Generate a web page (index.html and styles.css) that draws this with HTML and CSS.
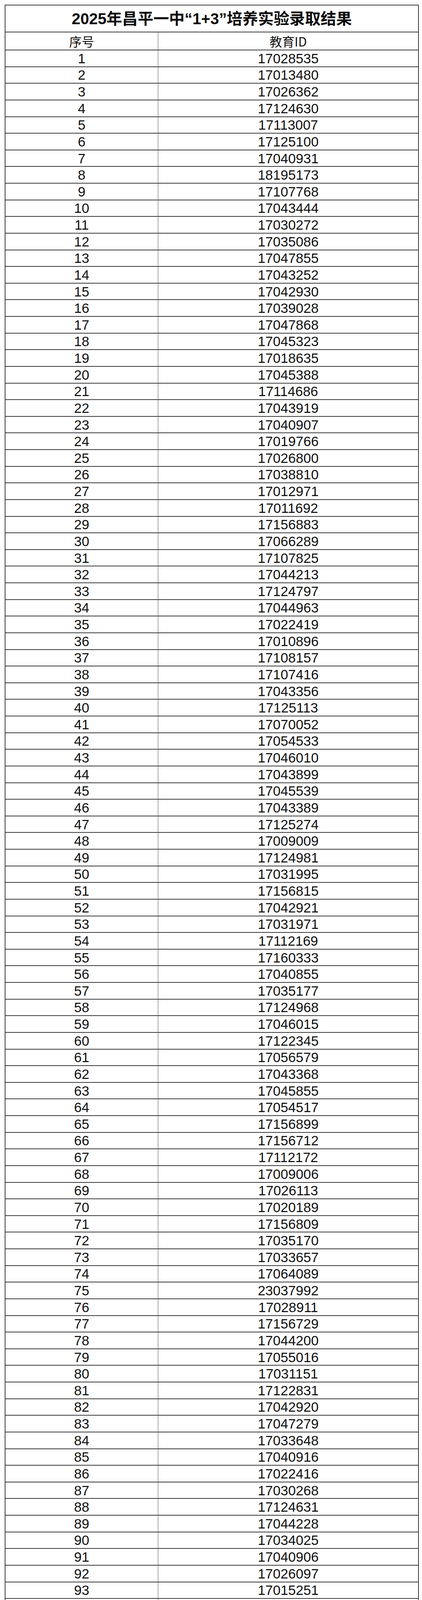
FILE: index.html
```html
<!DOCTYPE html>
<html lang="zh-CN">
<head>
<meta charset="utf-8">
<title>2025年昌平一中“1+3”培养实验录取结果</title>
<link rel="stylesheet" href="styles.css">
</head>
<body>
<div class="sheet">
  <div class="title">2025年昌平一中“1+3”培养实验录取结果</div>
  <div class="row head"><div class="c1">序号</div><div class="c2">教育ID</div></div>
  <div class="row"><div class="c1">1</div><div class="c2">17028535</div></div>
  <div class="row"><div class="c1">2</div><div class="c2">17013480</div></div>
  <div class="row"><div class="c1">3</div><div class="c2">17026362</div></div>
  <div class="row"><div class="c1">4</div><div class="c2">17124630</div></div>
  <div class="row"><div class="c1">5</div><div class="c2">17113007</div></div>
  <div class="row"><div class="c1">6</div><div class="c2">17125100</div></div>
  <div class="row"><div class="c1">7</div><div class="c2">17040931</div></div>
  <div class="row"><div class="c1">8</div><div class="c2">18195173</div></div>
  <div class="row"><div class="c1">9</div><div class="c2">17107768</div></div>
  <div class="row"><div class="c1">10</div><div class="c2">17043444</div></div>
  <div class="row"><div class="c1">11</div><div class="c2">17030272</div></div>
  <div class="row"><div class="c1">12</div><div class="c2">17035086</div></div>
  <div class="row"><div class="c1">13</div><div class="c2">17047855</div></div>
  <div class="row"><div class="c1">14</div><div class="c2">17043252</div></div>
  <div class="row"><div class="c1">15</div><div class="c2">17042930</div></div>
  <div class="row"><div class="c1">16</div><div class="c2">17039028</div></div>
  <div class="row"><div class="c1">17</div><div class="c2">17047868</div></div>
  <div class="row"><div class="c1">18</div><div class="c2">17045323</div></div>
  <div class="row"><div class="c1">19</div><div class="c2">17018635</div></div>
  <div class="row"><div class="c1">20</div><div class="c2">17045388</div></div>
  <div class="row"><div class="c1">21</div><div class="c2">17114686</div></div>
  <div class="row"><div class="c1">22</div><div class="c2">17043919</div></div>
  <div class="row"><div class="c1">23</div><div class="c2">17040907</div></div>
  <div class="row"><div class="c1">24</div><div class="c2">17019766</div></div>
  <div class="row"><div class="c1">25</div><div class="c2">17026800</div></div>
  <div class="row"><div class="c1">26</div><div class="c2">17038810</div></div>
  <div class="row"><div class="c1">27</div><div class="c2">17012971</div></div>
  <div class="row"><div class="c1">28</div><div class="c2">17011692</div></div>
  <div class="row"><div class="c1">29</div><div class="c2">17156883</div></div>
  <div class="row"><div class="c1">30</div><div class="c2">17066289</div></div>
  <div class="row"><div class="c1">31</div><div class="c2">17107825</div></div>
  <div class="row"><div class="c1">32</div><div class="c2">17044213</div></div>
  <div class="row"><div class="c1">33</div><div class="c2">17124797</div></div>
  <div class="row"><div class="c1">34</div><div class="c2">17044963</div></div>
  <div class="row"><div class="c1">35</div><div class="c2">17022419</div></div>
  <div class="row"><div class="c1">36</div><div class="c2">17010896</div></div>
  <div class="row"><div class="c1">37</div><div class="c2">17108157</div></div>
  <div class="row"><div class="c1">38</div><div class="c2">17107416</div></div>
  <div class="row"><div class="c1">39</div><div class="c2">17043356</div></div>
  <div class="row"><div class="c1">40</div><div class="c2">17125113</div></div>
  <div class="row"><div class="c1">41</div><div class="c2">17070052</div></div>
  <div class="row"><div class="c1">42</div><div class="c2">17054533</div></div>
  <div class="row"><div class="c1">43</div><div class="c2">17046010</div></div>
  <div class="row"><div class="c1">44</div><div class="c2">17043899</div></div>
  <div class="row"><div class="c1">45</div><div class="c2">17045539</div></div>
  <div class="row"><div class="c1">46</div><div class="c2">17043389</div></div>
  <div class="row"><div class="c1">47</div><div class="c2">17125274</div></div>
  <div class="row"><div class="c1">48</div><div class="c2">17009009</div></div>
  <div class="row"><div class="c1">49</div><div class="c2">17124981</div></div>
  <div class="row"><div class="c1">50</div><div class="c2">17031995</div></div>
  <div class="row"><div class="c1">51</div><div class="c2">17156815</div></div>
  <div class="row"><div class="c1">52</div><div class="c2">17042921</div></div>
  <div class="row"><div class="c1">53</div><div class="c2">17031971</div></div>
  <div class="row"><div class="c1">54</div><div class="c2">17112169</div></div>
  <div class="row"><div class="c1">55</div><div class="c2">17160333</div></div>
  <div class="row"><div class="c1">56</div><div class="c2">17040855</div></div>
  <div class="row"><div class="c1">57</div><div class="c2">17035177</div></div>
  <div class="row"><div class="c1">58</div><div class="c2">17124968</div></div>
  <div class="row"><div class="c1">59</div><div class="c2">17046015</div></div>
  <div class="row"><div class="c1">60</div><div class="c2">17122345</div></div>
  <div class="row"><div class="c1">61</div><div class="c2">17056579</div></div>
  <div class="row"><div class="c1">62</div><div class="c2">17043368</div></div>
  <div class="row"><div class="c1">63</div><div class="c2">17045855</div></div>
  <div class="row"><div class="c1">64</div><div class="c2">17054517</div></div>
  <div class="row"><div class="c1">65</div><div class="c2">17156899</div></div>
  <div class="row"><div class="c1">66</div><div class="c2">17156712</div></div>
  <div class="row"><div class="c1">67</div><div class="c2">17112172</div></div>
  <div class="row"><div class="c1">68</div><div class="c2">17009006</div></div>
  <div class="row"><div class="c1">69</div><div class="c2">17026113</div></div>
  <div class="row"><div class="c1">70</div><div class="c2">17020189</div></div>
  <div class="row"><div class="c1">71</div><div class="c2">17156809</div></div>
  <div class="row"><div class="c1">72</div><div class="c2">17035170</div></div>
  <div class="row"><div class="c1">73</div><div class="c2">17033657</div></div>
  <div class="row"><div class="c1">74</div><div class="c2">17064089</div></div>
  <div class="row"><div class="c1">75</div><div class="c2">23037992</div></div>
  <div class="row"><div class="c1">76</div><div class="c2">17028911</div></div>
  <div class="row"><div class="c1">77</div><div class="c2">17156729</div></div>
  <div class="row"><div class="c1">78</div><div class="c2">17044200</div></div>
  <div class="row"><div class="c1">79</div><div class="c2">17055016</div></div>
  <div class="row"><div class="c1">80</div><div class="c2">17031151</div></div>
  <div class="row"><div class="c1">81</div><div class="c2">17122831</div></div>
  <div class="row"><div class="c1">82</div><div class="c2">17042920</div></div>
  <div class="row"><div class="c1">83</div><div class="c2">17047279</div></div>
  <div class="row"><div class="c1">84</div><div class="c2">17033648</div></div>
  <div class="row"><div class="c1">85</div><div class="c2">17040916</div></div>
  <div class="row"><div class="c1">86</div><div class="c2">17022416</div></div>
  <div class="row"><div class="c1">87</div><div class="c2">17030268</div></div>
  <div class="row"><div class="c1">88</div><div class="c2">17124631</div></div>
  <div class="row"><div class="c1">89</div><div class="c2">17044228</div></div>
  <div class="row"><div class="c1">90</div><div class="c2">17034025</div></div>
  <div class="row"><div class="c1">91</div><div class="c2">17040906</div></div>
  <div class="row"><div class="c1">92</div><div class="c2">17026097</div></div>
  <div class="row"><div class="c1">93</div><div class="c2">17015251</div></div>
  <div class="row"><div class="c1">94</div><div class="c2">17114668</div></div>
  <div class="row"><div class="c1">95</div><div class="c2">17075364</div></div>
  <div class="row"><div class="c1">96</div><div class="c2">17010289</div></div>
  <div class="row"><div class="c1">97</div><div class="c2">17044221</div></div>
  <div class="row"><div class="c1">98</div><div class="c2">17045407</div></div>
  <div class="row"><div class="c1">99</div><div class="c2">17017119</div></div>
  <div class="row"><div class="c1">100</div><div class="c2">17041121</div></div>
  <div class="row tall"><div class="c1">101</div><div class="c2">17137718</div></div>
  <div class="row tall"><div class="c1">102</div><div class="c2">17114655</div></div>
  <div class="row tall"><div class="c1">103</div><div class="c2">17015912</div></div>
  <div class="row tall"><div class="c1">104</div><div class="c2">16018333</div></div>
  <div class="row tall"><div class="c1">105</div><div class="c2">17033669</div></div>
  <div class="row tall"><div class="c1">106</div><div class="c2">17151156</div></div>
  <div class="row tall"><div class="c1">107</div><div class="c2">17112851</div></div>
  <div class="row tall"><div class="c1">108</div><div class="c2">17156737</div></div>
  <div class="row tall"><div class="c1">109</div><div class="c2">23136424</div></div>
  <div class="row tall"><div class="c1">110</div><div class="c2">17035155</div></div>
  <div class="row tall"><div class="c1">111</div><div class="c2">17047548</div></div>
  <div class="row tall"><div class="c1">112</div><div class="c2">17039017</div></div>
  <div class="row tall"><div class="c1">113</div><div class="c2">17156718</div></div>
  <div class="row tall"><div class="c1">114</div><div class="c2">17034687</div></div>
  <div class="row tall"><div class="c1">115</div><div class="c2">17034377</div></div>
  <div class="row tall"><div class="c1">116</div><div class="c2">17022417</div></div>
  <div class="row tall"><div class="c1">117</div><div class="c2">17047268</div></div>
  <div class="row tall"><div class="c1">118</div><div class="c2">17054728</div></div>
  <div class="row tall"><div class="c1">119</div><div class="c2">17044204</div></div>
  <div class="row tall"><div class="c1">120</div><div class="c2">17031998</div></div>
  <div class="row tall"><div class="c1">121</div><div class="c2">17016612</div></div>
  <div class="row tall"><div class="c1">122</div><div class="c2">17045563</div></div>
  <div class="row tall"><div class="c1">123</div><div class="c2">17045139</div></div>
  <div class="row tall"><div class="c1">124</div><div class="c2">17043430</div></div>
  <div class="row tall"><div class="c1">125</div><div class="c2">17122355</div></div>
  <div class="row tall"><div class="c1">126</div><div class="c2">17046037</div></div>
  <div class="row tall"><div class="c1">127</div><div class="c2">23063916</div></div>
  <div class="row tall"><div class="c1">128</div><div class="c2">17010894</div></div>
  <div class="row tall"><div class="c1">129</div><div class="c2">17046039</div></div>
  <div class="row tall"><div class="c1">130</div><div class="c2">17002772</div></div>
  <div class="row tall"><div class="c1">131</div><div class="c2">17047870</div></div>
  <div class="row tall"><div class="c1">132</div><div class="c2">17028915</div></div>
  <div class="row tall"><div class="c1">133</div><div class="c2">17156783</div></div>
  <div class="row tall"><div class="c1">134</div><div class="c2">17045569</div></div>
  <div class="row tall"><div class="c1">135</div><div class="c2">17112847</div></div>
  <div class="row tall"><div class="c1">136</div><div class="c2">17156889</div></div>
  <div class="row tall"><div class="c1">137</div><div class="c2">17031988</div></div>
  <div class="row tall"><div class="c1">138</div><div class="c2">17125278</div></div>
  <div class="row tall"><div class="c1">139</div><div class="c2">17035596</div></div>
  <div class="row tall last"><div class="c1">140</div><div class="c2">21004266</div>
    <div class="wm">
      <svg class="wm-icon" viewBox="0 0 44 40" width="42" height="38" aria-hidden="true">
        <ellipse cx="17" cy="15" rx="16" ry="13.5" fill="#bdbdbd"/>
        <path d="M7 24 L5 31 L13 27 Z" fill="#bdbdbd"/>
        <ellipse cx="29" cy="25" rx="14" ry="11.5" fill="#fff"/>
        <ellipse cx="29" cy="25" rx="12.5" ry="10.2" fill="#bdbdbd"/>
        <path d="M36 32 L38 38 L31 34 Z" fill="#bdbdbd"/>
        <circle cx="11.5" cy="11" r="2.2" fill="#fff"/>
        <circle cx="21.5" cy="11" r="2.2" fill="#fff"/>
        <circle cx="24.5" cy="22.5" r="1.8" fill="#fff"/>
        <circle cx="33.5" cy="22.5" r="1.8" fill="#fff"/>
      </svg>
      <span class="wm-text">公众号 · 北京昌平一中教育集团</span>
    </div>
  </div>
</div>
</body>
</html>
```

FILE: styles.css
```css
html, body {
  margin: 0;
  padding: 0;
  background: #ffffff;
}

body {
  width: 1080px;
  box-sizing: border-box;
  padding: 12px 8px 10px 12px;
  font-family: "Liberation Sans", "Noto Sans CJK SC", sans-serif;
  color: #111111;
}

.sheet {
  width: 1060px;
  box-sizing: border-box;
  border-top: 2px solid #3a3a3a;
  border-left: 2px solid #3a3a3a;
  border-right: 2px solid #3a3a3a;
}

.title {
  height: 69px;
  box-sizing: border-box;
  border-bottom: 2px solid #3a3a3a;
  display: flex;
  align-items: center;
  justify-content: center;
  font-family: "Liberation Sans", "Noto Sans CJK SC", sans-serif;
  font-weight: 700;
  font-size: 40px;
  line-height: 1;
  color: #0a0a0a;
}

.row {
  display: grid;
  grid-template-columns: 391px 1fr;
  height: 42.64px;
  box-sizing: border-box;
  border-bottom: 2px solid #3a3a3a;
  font-size: 35px;
  line-height: 1;
}

.row.head {
  height: 46px;
  font-family: "Noto Sans CJK SC", sans-serif;
  font-size: 32px;
}

.row.tall {
  height: 46.17px;
}

.row.last {
  position: relative;
}

.c1,
.c2 {
  display: flex;
  align-items: center;
  justify-content: center;
}

.c1 {
  border-right: 1px solid #555555;
}

.wm {
  position: absolute;
  left: 553px;
  top: -4px;
  display: flex;
  align-items: center;
  gap: 10px;
  pointer-events: none;
}

.wm-icon {
  display: block;
}

.wm-text {
  font-family: "Noto Sans CJK SC", sans-serif;
  font-size: 30px;
  line-height: 1;
  color: rgba(170, 170, 170, 0.85);
  white-space: nowrap;
}
```
